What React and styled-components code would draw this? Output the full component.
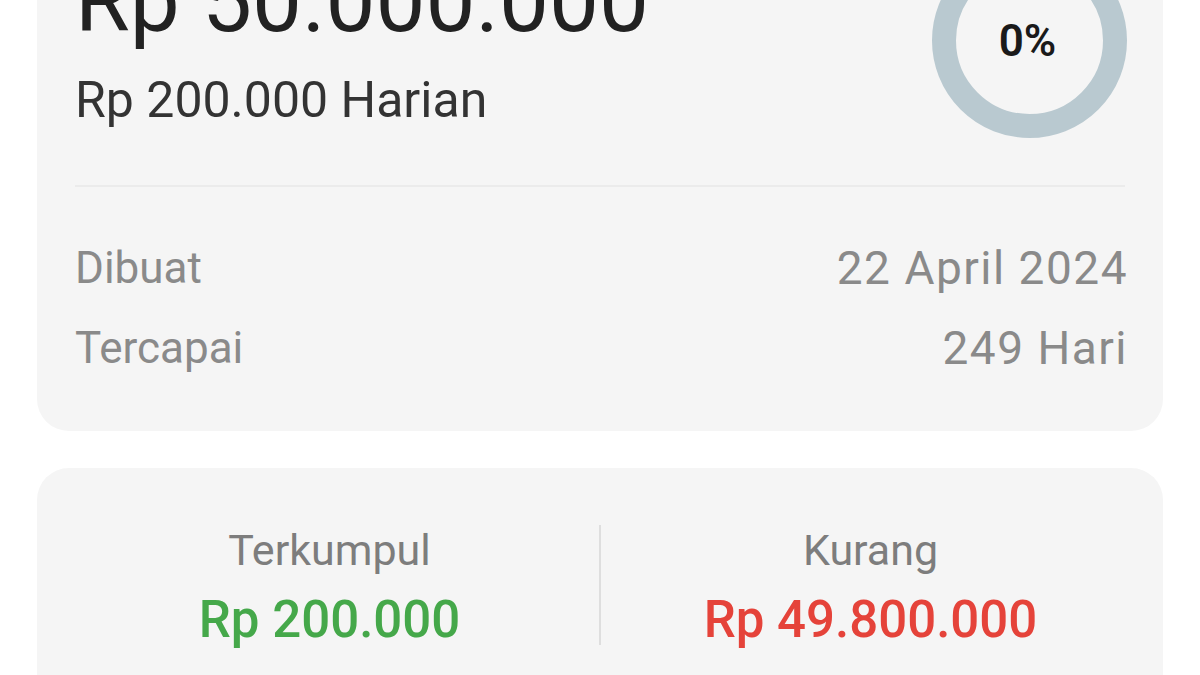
import React from 'react'
import styled, { createGlobalStyle } from 'styled-components'

const GlobalStyle = createGlobalStyle`
  html, body {
    margin: 0;
    padding: 0;
    background: #ffffff;
    font-family: Roboto, "Noto Sans", sans-serif;
    overflow: hidden;
  }
`;

const Page = styled.div`
  width: 1200px;
  height: 675px;
  padding: 0 37px;
  box-sizing: border-box;
  display: flex;
  flex-direction: column;
  gap: 37px;
  overflow: hidden;
`;

const Card = styled.section`
  background: #f5f5f5;
  border-radius: 32px;
  padding: ${props => props.$pad};
  margin-top: ${props => props.$top || '0'};
  box-sizing: border-box;
  flex-shrink: 0;
`;

const Header = styled.div`
  display: flex;
  justify-content: space-between;
  align-items: flex-start;
`;

const Goal = styled.div`
  display: flex;
  flex-direction: column;
  padding-top: 13px;
`;

const Amount = styled.div`
  font-size: 89px;
  line-height: 1;
  color: #222;
  font-weight: 400;
`;

const Daily = styled.div`
  font-size: 50px;
  line-height: 1;
  color: #333;
  margin-top: 30px;
`;

const Ring = styled.div`
  width: 195px;
  height: 195px;
  border-radius: 50%;
  border: 24px solid #b9c9d0;
  box-sizing: border-box;
  display: flex;
  align-items: center;
  justify-content: center;
  margin-right: -2px;
`;

const Percent = styled.span`
  font-size: 44px;
  font-weight: 600;
  color: #1a1a1a;
  margin-left: -4px;
`;

const Divider = styled.div`
  height: 2px;
  background: #ebebeb;
  margin: 47px 0 59px;
`;

const Rows = styled.div`
  display: flex;
  flex-direction: column;
  gap: 36px;
`;

const Row = styled.div`
  display: flex;
  justify-content: space-between;
  align-items: center;
  height: 44px;
  font-size: 44px;
  line-height: 44px;
  color: #8a8a8a;
`;

const Value = styled.span`
  font-size: 46px;
  letter-spacing: 1.5px;
  margin-right: -3px;
`;

const Stats = styled.div`
  display: grid;
  grid-template-columns: 1fr 2px 1fr;
  margin: 0 -15px;
`;

const Stat = styled.div`
  display: flex;
  flex-direction: column;
  align-items: center;
  gap: 22px;
  padding-top: 1px;
`;

const StatLabel = styled.div`
  font-size: 43px;
  line-height: 1;
  color: #7d7d7d;
`;

const StatValue = styled.div`
  font-size: 51px;
  line-height: 1;
  font-weight: 500;
  color: ${props => props.$color};
`;

const VLine = styled.div`
  background: #dedede;
  height: 120px;
  margin-top: -3px;
`;

export default function App() {
  return (
    <>
      <GlobalStyle />
      <Page>
        <Card $top="-90px" $pad="33px 38px 61px">
          <Header>
            <Goal>
              <Amount>Rp 50.000.000</Amount>
              <Daily>Rp 200.000 Harian</Daily>
            </Goal>
            <Ring>
              <Percent>0%</Percent>
            </Ring>
          </Header>
          <Divider />
          <Rows>
            <Row>
              <span>Dibuat</span>
              <Value>22 April 2024</Value>
            </Row>
            <Row>
              <span>Tercapai</span>
              <Value>249 Hari</Value>
            </Row>
          </Rows>
        </Card>
        <Card $pad="60px 38px 60px">
          <Stats>
            <Stat>
              <StatLabel>Terkumpul</StatLabel>
              <StatValue $color="#45a84a">Rp 200.000</StatValue>
            </Stat>
            <VLine />
            <Stat>
              <StatLabel>Kurang</StatLabel>
              <StatValue $color="#e5433a">Rp 49.800.000</StatValue>
            </Stat>
          </Stats>
        </Card>
      </Page>
    </>
  )
}
